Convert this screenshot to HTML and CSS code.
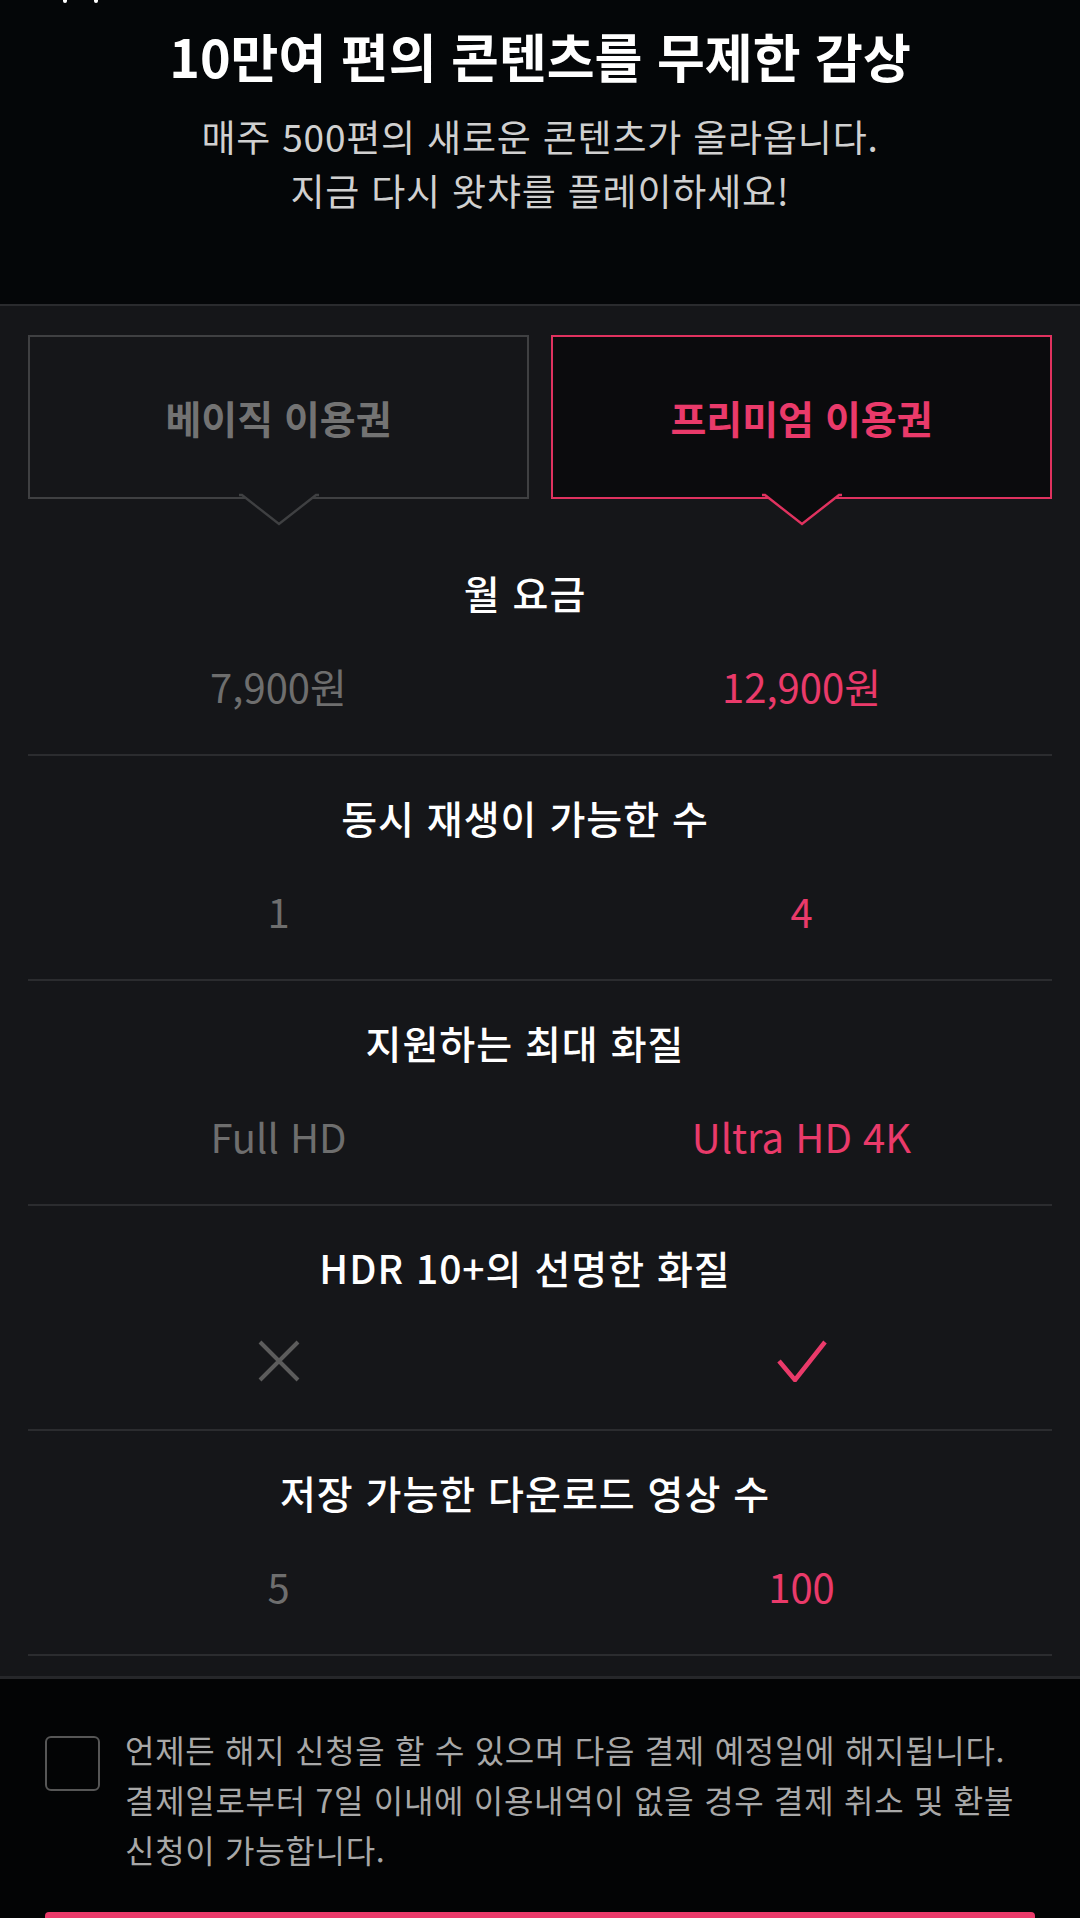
FILE: index.html
```html
<!DOCTYPE html>
<html lang="ko">
<head>
<meta charset="utf-8">
<title>왓챠 이용권</title>
<link rel="stylesheet" href="styles.css">
</head>
<body>
<div class="page">
  <header class="hero">
    <span class="status-dot dot-a"></span>
    <span class="status-dot dot-b"></span>
    <h1 class="hero-title">10만여 편의 콘텐츠를 무제한 감상</h1>
    <p class="hero-sub">매주 500편의 새로운 콘텐츠가 올라옵니다.<br>지금 다시 왓챠를 플레이하세요!</p>
  </header>

  <main class="plans">
    <div class="tabs">
      <div class="tab tab-basic">
        <span class="tab-label">베이직 이용권</span>
        <svg class="tab-pointer" viewBox="0 0 80 32" width="80" height="32">
          <polygon points="3,0 40,30 77,0" class="ptr-fill"/>
          <polyline points="0,1 3,1 40,30 77,1 80,1" class="ptr-line"/>
        </svg>
      </div>
      <div class="tab tab-premium">
        <span class="tab-label">프리미엄 이용권</span>
        <svg class="tab-pointer" viewBox="0 0 80 32" width="80" height="32">
          <polygon points="3,0 40,30 77,0" class="ptr-fill"/>
          <polyline points="0,1 3,1 40,30 77,1 80,1" class="ptr-line"/>
        </svg>
      </div>
    </div>

    <section class="row">
      <h2 class="row-title">월 요금</h2>
      <div class="row-values">
        <span class="val val-basic">7,900원</span>
        <span class="val val-premium">12,900원</span>
      </div>
    </section>

    <section class="row">
      <h2 class="row-title">동시 재생이 가능한 수</h2>
      <div class="row-values">
        <span class="val val-basic">1</span>
        <span class="val val-premium">4</span>
      </div>
    </section>

    <section class="row">
      <h2 class="row-title">지원하는 최대 화질</h2>
      <div class="row-values">
        <span class="val val-basic">Full HD</span>
        <span class="val val-premium">Ultra HD 4K</span>
      </div>
    </section>

    <section class="row">
      <h2 class="row-title">HDR 10+의 선명한 화질</h2>
      <div class="row-values">
        <span class="val val-basic">
          <svg class="icon" viewBox="0 0 44 42" width="44" height="42">
            <path d="M3 2 L41 40 M41 2 L3 40" class="icon-x"/>
          </svg>
        </span>
        <span class="val val-premium">
          <svg class="icon" viewBox="0 0 50 42" width="50" height="42">
            <path d="M2 21 L18 40 L48 2" class="icon-check"/>
          </svg>
        </span>
      </div>
    </section>

    <section class="row">
      <h2 class="row-title">저장 가능한 다운로드 영상 수</h2>
      <div class="row-values">
        <span class="val val-basic">5</span>
        <span class="val val-premium">100</span>
      </div>
    </section>
  </main>

  <footer class="agree">
    <label class="agree-row">
      <span class="checkbox"></span>
      <span class="agree-text">언제든 해지 신청을 할 수 있으며 다음 결제 예정일에 해지됩니다. 결제일로부터 7일 이내에 이용내역이 없을 경우 결제 취소 및 환불 신청이 가능합니다.</span>
    </label>
    <div class="buy-button" role="button" aria-label="이용권 구매"></div>
  </footer>
</div>
</body>
</html>
```

FILE: styles.css
```css
* {
  box-sizing: border-box;
}

html, body {
  margin: 0;
  padding: 0;
  background: #030405;
}

body {
  font-family: "Noto Sans CJK KR", "Noto Sans", sans-serif;
  color: #ffffff;
  width: 1080px;
  overflow: hidden;
}

.page {
  width: 1080px;
}

/* ---------- hero ---------- */
.hero {
  position: relative;
  background: #040608;
  border-bottom: 2px solid #2a2b2e;
  height: 306px;
  padding-top: 25px;
  text-align: center;
}

.status-dot {
  position: absolute;
  top: 0;
  width: 4px;
  height: 3px;
  background: #ffffff;
  border-radius: 0 0 2px 2px;
}

.dot-a { left: 63px; }
.dot-b { left: 94px; }

.hero-title {
  margin: 0;
  font-size: 52px;
  line-height: 62px;
  font-weight: 700;
  letter-spacing: 0;
  color: #ffffff;
}

.hero-sub {
  margin: 22px 0 0;
  font-size: 37px;
  line-height: 54px;
  font-weight: 400;
  color: #d0d0d0;
  letter-spacing: 0.8px;
}

/* ---------- plans ---------- */
.plans {
  background: #151619;
  padding: 29px 28px 20px;
  border-bottom: 3px solid #26272a;
}

.tabs {
  display: grid;
  grid-template-columns: 1fr 1fr;
  column-gap: 22px;
  margin-bottom: 32px;
}

.tab {
  position: relative;
  height: 164px;
  display: flex;
  align-items: center;
  justify-content: center;
  border: 2px solid #3f4042;
}

.tab-label {
  font-size: 39px;
  font-weight: 700;
  letter-spacing: 0;
}

.tab-basic {
  background: #151619;
  color: #737373;
}

.tab-premium {
  background: #0b0b0d;
  border-color: #e0325f;
  color: #ea3a6a;
}

.tab-pointer {
  position: absolute;
  left: 50%;
  top: 100%;
  margin-top: -3px;
  transform: translateX(-50%);
  overflow: visible;
}

.ptr-fill {
  stroke: none;
}

.ptr-line {
  fill: none;
  stroke-width: 2.4;
  stroke-linejoin: miter;
}

.tab-basic .ptr-fill { fill: #151619; }
.tab-basic .ptr-line { stroke: #3f4042; }
.tab-premium .ptr-fill { fill: #0b0b0d; }
.tab-premium .ptr-line { stroke: #e0325f; }

.row {
  height: 225px;
  padding-top: 36px;
  border-bottom: 2px solid #2b2c2f;
  text-align: center;
}

.row-title {
  margin: 0;
  padding-right: 30px;
  font-size: 39px;
  line-height: 51px;
  font-weight: 500;
  color: #ffffff;
  letter-spacing: 1px;
}

.row-values {
  display: grid;
  grid-template-columns: 1fr 1fr;
  column-gap: 22px;
  margin-top: 43px;
}

.val {
  height: 50px;
  display: flex;
  align-items: center;
  justify-content: center;
  font-size: 40px;
  line-height: 50px;
  font-weight: 400;
  letter-spacing: 0;
}

.val-basic {
  color: #6e6e6e;
}

.val-premium {
  color: #ea3a6a;
}

.icon {
  display: block;
}

.icon-x {
  fill: none;
  stroke: #5c5c5c;
  stroke-width: 4;
}

.icon-check {
  fill: none;
  stroke: #ea3a6a;
  stroke-width: 4.5;
  stroke-linejoin: miter;
}

/* ---------- footer ---------- */
.agree {
  background: #030405;
  padding: 45px 45px 0;
}

.agree-row {
  display: flex;
  align-items: flex-start;
  gap: 25px;
}

.checkbox {
  flex: 0 0 auto;
  width: 55px;
  height: 55px;
  margin-top: 12px;
  border: 2px solid #565656;
  border-radius: 6px;
}

.agree-text {
  flex: 1 1 auto;
  font-size: 32px;
  line-height: 50px;
  color: #a8a8a8;
  letter-spacing: 0.7px;
}

.buy-button {
  margin-top: 38px;
  height: 130px;
  background: #ea3a6a;
  border-radius: 4px;
}
```
